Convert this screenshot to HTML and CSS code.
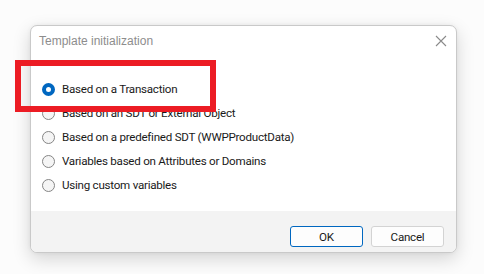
FILE: index.html
```html
<!DOCTYPE html>
<html>
<head>
<meta charset="utf-8">
<link rel="stylesheet" href="styles.css">
</head>
<body>
<div class="dialog">
  <div class="header">
    <span class="title">Template initialization</span>
    <svg class="close" width="12" height="12" viewBox="0 0 12 12"><path d="M1 1L11 11M11 1L1 11" stroke="#8a8a8a" stroke-width="1.1" fill="none"/></svg>
  </div>
  <div class="body">
    <label class="row"><span class="radio checked"></span><span>Based on a Transaction</span></label>
    <label class="row"><span class="radio"></span><span>Based on an SDT or External Object</span></label>
    <label class="row"><span class="radio"></span><span>Based on a predefined SDT (WWPProductData)</span></label>
    <label class="row"><span class="radio"></span><span>Variables based on Attributes or Domains</span></label>
    <label class="row"><span class="radio"></span><span>Using custom variables</span></label>
  </div>
  <div class="footer">
    <button class="btn primary">OK</button>
    <button class="btn">Cancel</button>
  </div>
</div>
<div class="highlight"></div>
</body>
</html>
```
FILE: styles.css
```css
html, body {
  margin: 0;
  padding: 0;
  background: #ffffff;
  font-family: Roboto, "Liberation Sans", Arial, sans-serif;
  font-size: 12px;
}
body {
  width: 484px;
  height: 274px;
  overflow: hidden;
  position: relative;
  background: #fcfcfc;
}
.dialog {
  box-sizing: border-box;
  margin: 25px 0 0 30px;
  width: 427px;
  height: 228px;
  border: 1px solid #c9c9c9;
  border-radius: 7px;
  background: #ffffff;
  box-shadow: 0 6px 18px rgba(0,0,0,0.16), 0 0 4px rgba(0,0,0,0.05);
  display: flex;
  flex-direction: column;
  overflow: hidden;
}
.header {
  height: 30px;
  display: flex;
  align-items: center;
  justify-content: space-between;
  padding: 0 9px 0 8px;
}
.title {
  color: #8d8d8d;
  font-family: "Liberation Sans", Arial, sans-serif;
  font-size: 12px;
}
.close {
  display: block;
}
.body {
  flex: 1;
  padding: 21px 0 0 11px;
  display: flex;
  flex-direction: column;
}
.row {
  height: 24px;
  display: flex;
  align-items: center;
  gap: 7px;
  color: #1a1a1a;
  font-size: 11.6px;
  letter-spacing: -0.25px;
}
.radio {
  box-sizing: border-box;
  width: 13px;
  height: 13px;
  border-radius: 50%;
  border: 1px solid #858585;
  background: #f5f5f5;
  flex: none;
}
.radio.checked {
  border: 4px solid #0067c0;
  background: #ffffff;
}
.footer {
  height: 41px;
  background: #f3f3f3;
  display: flex;
  justify-content: flex-end;
  align-items: flex-start;
  gap: 8px;
  padding: 15px 12px 0 0;
  box-sizing: border-box;
}
.btn {
  box-sizing: border-box;
  width: 73px;
  height: 21px;
  border: 1px solid #d3d3d3;
  border-radius: 3px;
  background: #fdfdfd;
  font-family: Roboto, "Liberation Sans", Arial, sans-serif;
  font-size: 11.6px;
  letter-spacing: -0.25px;
  color: #1a1a1a;
  padding: 0;
}
.btn.primary {
  border-color: #0067c0;
  background: #fdfdfd;
}
.highlight {
  position: absolute;
  left: 15px;
  top: 60px;
  width: 201px;
  height: 52px;
  box-sizing: border-box;
  border: 6px solid #ec1c24;
}
```
